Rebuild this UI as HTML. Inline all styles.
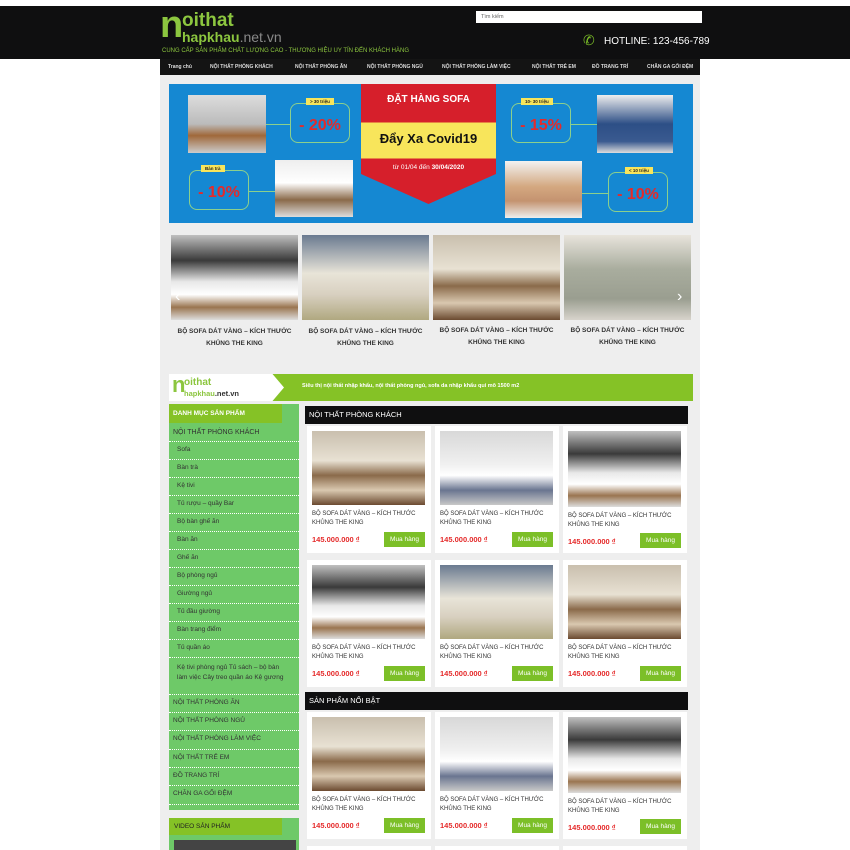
<!DOCTYPE html>
<html><head><meta charset="utf-8"><style>
*{margin:0;padding:0;box-sizing:border-box}
body{width:850px;height:850px;overflow:hidden;background:#fff;font-family:"Liberation Sans",Arial,sans-serif;position:relative}
.a{position:absolute}
#hdr{left:0;top:6px;width:850px;height:53px;background:#0f0f10}
#nav{left:160px;top:59px;width:540px;height:16px;background:#141414;color:#ddd;font-size:5px;font-weight:bold}
#nav span{position:absolute;top:5px}
#wrap{left:160px;top:75px;width:540px;height:775px;background:#eee}
.img1{background:linear-gradient(180deg,#c9bfae 0%,#e8e1d3 40%,#8a6a4a 60%,#d9c8b0 80%,#6b4a30 100%)}
.img2{background:linear-gradient(180deg,#d8d8d8 0%,#f0f0f0 45%,#ffffff 60%,#6a7590 80%,#c8c8c8 100%)}
.img3{background:linear-gradient(180deg,#c0c0c0 0%,#3a3a3a 30%,#e8e8e8 55%,#fff 70%,#9a7550 85%,#ddd 100%)}
.card{position:absolute;width:124px;height:127px;background:#fff}
.card .im{position:absolute;left:5px;top:5px;width:113px;height:74px}
.card .t{position:absolute;left:5px;top:84px;width:118px;font-size:6px;line-height:9px;color:#333}
.card .p{position:absolute;left:5px;top:109px;font-size:7.5px;font-weight:bold;color:#e52a2a}
.card .b{position:absolute;right:6px;top:106px;width:41px;height:15px;background:#7cbf28;color:#fff;font-size:6.5px;text-align:center;line-height:15px}
.sb{position:absolute;left:169px;width:130px;border-bottom:1px dotted #fff;font-size:7px;color:#333}
.sh{position:absolute;left:305px;width:383px;height:18px;background:#0f0f10;color:#fff;font-size:7.5px;line-height:18px;padding-left:4px}
.sl{position:absolute;width:127px;height:85px}
.cap{position:absolute;width:127px;text-align:center;font-size:6.5px;font-weight:bold;color:#333;line-height:12px}
.pb{position:absolute;width:60px;height:40px;border:1px solid #8cd08c;border-radius:8px;color:#e52a2a;font-weight:bold;font-size:16px;text-align:center;line-height:44px}
.tag{position:absolute;background:#f8e55b;color:#222;font-size:4.5px;font-weight:bold;padding:1px 4px}
</style></head><body>
<div id="hdr" class="a">
  <div class="a" style="left:160px;top:2px;font-size:38px;font-weight:bold;color:#8cc63f;line-height:34px">n</div>
  <div class="a" style="left:182px;top:5px;font-size:19px;font-weight:bold;color:#8cc63f;line-height:19px">oithat</div>
  <div class="a" style="left:182px;top:23px;font-size:14px;font-weight:bold;color:#8cc63f;line-height:16px">hapkhau<span style="color:#888;font-weight:normal">.net.vn</span></div>
  <div class="a" style="left:162px;top:42px;font-size:6px;color:#8cc63f">CUNG CẤP SẢN PHẨM CHẤT LƯỢNG CAO - THƯƠNG HIỆU UY TÍN ĐẾN KHÁCH HÀNG</div>
  <div class="a" style="left:476px;top:5px;width:226px;height:12px;background:#fff;font-size:5.5px;color:#666;padding:3px 5px">Tìm kiếm</div>
  <div class="a" style="left:583px;top:26px;font-size:14px;color:#7cbf28">✆</div>
  <div class="a" style="left:604px;top:30px;font-size:10px;color:#fff">HOTLINE: 123-456-789</div>
</div>
<div id="nav" class="a">
<span style="left:8px">Trang chủ</span><span style="left:50px">NỘI THẤT PHÒNG KHÁCH</span><span style="left:135px">NỘI THẤT PHÒNG ĂN</span><span style="left:207px">NỘI THẤT PHÒNG NGỦ</span><span style="left:282px">NỘI THẤT PHÒNG LÀM VIỆC</span><span style="left:372px">NỘI THẤT TRẺ EM</span><span style="left:432px">ĐỒ TRANG TRÍ</span><span style="left:487px">CHĂN GA GỐI ĐỆM</span>
</div>
<div id="wrap" class="a"></div>
<!-- banner -->
<div class="a" style="left:169px;top:84px;width:524px;height:139px;background:#1588d2"></div>
<div class="a" style="left:188px;top:95px;width:78px;height:58px;background:linear-gradient(#ddd,#bbb 50%,#a0683a 70%,#ccc)"></div>
<div class="pb" style="left:290px;top:103px">- 20%</div>
<div class="tag" style="left:306px;top:98px">&gt; 30 triệu</div>
<div class="a" style="left:266px;top:124px;width:24px;height:1px;background:#8cd08c"></div>
<div class="pb" style="left:189px;top:170px">- 10%</div>
<div class="tag" style="left:201px;top:165px">Bàn trà</div>
<div class="a" style="left:249px;top:191px;width:26px;height:1px;background:#8cd08c"></div>
<div class="a" style="left:275px;top:160px;width:78px;height:57px;background:linear-gradient(#eee,#fff 40%,#8a6a4a 70%,#ddd)"></div>
<div class="a" style="left:361px;top:84px;width:135px;height:120px;background:linear-gradient(#d61f2b 0,#d61f2b 32%,#f8e55b 32%,#f8e55b 62%,#d61f2b 62%);clip-path:polygon(0 0,100% 0,100% 75%,50% 100%,0 75%)"></div>
<div class="a" style="left:361px;top:94px;width:135px;text-align:center;color:#fff;font-weight:bold;font-size:10px">ĐẶT HÀNG SOFA</div>
<div class="a" style="left:361px;top:131px;width:135px;text-align:center;color:#111;font-weight:bold;font-size:13px">Đẩy Xa Covid19</div>
<div class="a" style="left:361px;top:164px;width:135px;text-align:center;color:#fff;font-size:6.5px">từ 01/04 đến <b>30/04/2020</b></div>
<div class="pb" style="left:511px;top:103px">- 15%</div>
<div class="tag" style="left:521px;top:98px">10- 30 triệu</div>
<div class="a" style="left:571px;top:124px;width:26px;height:1px;background:#8cd08c"></div>
<div class="a" style="left:597px;top:95px;width:76px;height:58px;background:linear-gradient(#eee,#2d4f86 50%,#3a5a90 80%,#ddd)"></div>
<div class="a" style="left:505px;top:161px;width:77px;height:57px;background:linear-gradient(#f2f2f2,#d4a880 45%,#c49370 70%,#eee)"></div>
<div class="pb" style="left:608px;top:172px">- 10%</div>
<div class="tag" style="left:625px;top:167px">&lt; 10 triệu</div>
<div class="a" style="left:582px;top:193px;width:26px;height:1px;background:#8cd08c"></div>
<!-- slider -->
<div class="sl img3" style="left:171px;top:235px"></div>
<div class="sl img1" style="left:302px;top:235px;background:linear-gradient(#6a7a90,#e8e4d8 45%,#d8d0c0 70%,#b0a880)"></div>
<div class="sl img1" style="left:433px;top:235px"></div>
<div class="sl" style="left:564px;top:235px;background:linear-gradient(#e8e4dc,#a9ad9e 40%,#9a9e90 75%,#d8d4cc)"></div>
<div class="a" style="left:175px;top:288px;color:#fff;font-size:16px">‹</div>
<div class="a" style="left:677px;top:288px;color:#fff;font-size:16px">›</div>
<div class="cap" style="left:171px;top:326px">BỘ SOFA DÁT VÀNG – KÍCH THƯỚC KHỦNG THE KING</div>
<div class="cap" style="left:302px;top:326px">BỘ SOFA DÁT VÀNG – KÍCH THƯỚC KHỦNG THE KING</div>
<div class="cap" style="left:433px;top:325px">BỘ SOFA DÁT VÀNG – KÍCH THƯỚC KHỦNG THE KING</div>
<div class="cap" style="left:564px;top:325px">BỘ SOFA DÁT VÀNG – KÍCH THƯỚC KHỦNG THE KING</div>
<!-- green bar -->
<div class="a" style="left:169px;top:374px;width:524px;height:27px;background:#85c226"></div>
<div class="a" style="left:169px;top:374px;width:115px;height:27px;background:#fff;clip-path:polygon(0 0,90% 0,100% 50%,90% 100%,0 100%)"></div>
<div class="a" style="left:172px;top:372px;font-size:22px;font-weight:bold;color:#8cc63f">n</div>
<div class="a" style="left:184px;top:377px;font-size:10px;font-weight:bold;color:#8cc63f">oithat</div>
<div class="a" style="left:184px;top:389px;font-size:7.5px;font-weight:bold;color:#8cc63f">hapkhau<span style="color:#333">.net.vn</span></div>
<div class="a" style="left:302px;top:383px;font-size:5.5px;font-weight:bold;color:#fff">Siêu thị nội thất nhập khẩu, nội thất phòng ngủ, sofa da nhập khẩu qui mô 1500 m2</div>
<!-- sidebar -->
<div class="a" style="left:169px;top:404px;width:130px;height:406px;background:#6ec968"></div>
<div class="a" style="left:169px;top:404px;width:113px;height:19px;background:#85c226;color:#fff;font-size:6.5px;font-weight:bold;line-height:19px;padding-left:4px">DANH MỤC SẢN PHẨM</div>
<div class="sb" style="top:427px;height:15px;padding:2px 4px;font-size:7px">NỘI THẤT PHÒNG KHÁCH</div>
<div class="sb" style="top:442px;height:18px;padding:4px 8px;font-size:6.5px">Sofa</div>
<div class="sb" style="top:460px;height:18px;padding:4px 8px;font-size:6.5px">Bàn trà</div>
<div class="sb" style="top:478px;height:18px;padding:4px 8px;font-size:6.5px">Kệ tivi</div>
<div class="sb" style="top:496px;height:18px;padding:4px 8px;font-size:6.5px">Tủ rượu – quầy Bar</div>
<div class="sb" style="top:514px;height:18px;padding:4px 8px;font-size:6.5px">Bộ bàn ghế ăn</div>
<div class="sb" style="top:532px;height:18px;padding:4px 8px;font-size:6.5px">Bàn ăn</div>
<div class="sb" style="top:550px;height:18px;padding:4px 8px;font-size:6.5px">Ghế ăn</div>
<div class="sb" style="top:568px;height:18px;padding:4px 8px;font-size:6.5px">Bộ phòng ngủ</div>
<div class="sb" style="top:586px;height:18px;padding:4px 8px;font-size:6.5px">Giường ngủ</div>
<div class="sb" style="top:604px;height:18px;padding:4px 8px;font-size:6.5px">Tủ đầu giường</div>
<div class="sb" style="top:622px;height:18px;padding:4px 8px;font-size:6.5px">Bàn trang điểm</div>
<div class="sb" style="top:640px;height:18px;padding:4px 8px;font-size:6.5px">Tủ quần áo</div>
<div class="sb" style="top:658px;height:37px;padding:5px 12px 0 8px;font-size:6.5px;line-height:10px">Kệ tivi phòng ngủ Tủ sách – bộ bàn làm việc Cây treo quần áo Kệ gương</div>
<div class="sb" style="top:695px;height:18px;padding:4px 4px;font-size:6.5px">NỘI THẤT PHÒNG ĂN</div>
<div class="sb" style="top:713px;height:18px;padding:4px 4px;font-size:6.5px">NỘI THẤT PHÒNG NGỦ</div>
<div class="sb" style="top:731px;height:19px;padding:4px 4px;font-size:6.5px">NỘI THẤT PHÒNG LÀM VIỆC</div>
<div class="sb" style="top:750px;height:18px;padding:4px 4px;font-size:6.5px">NỘI THẤT TRẺ EM</div>
<div class="sb" style="top:768px;height:18px;padding:4px 4px;font-size:6.5px">ĐỒ TRANG TRÍ</div>
<div class="sb" style="top:786px;height:19px;padding:4px 4px;font-size:6.5px">CHĂN GA GỐI ĐỆM</div>
<div class="a" style="left:169px;top:818px;width:130px;height:32px;background:#6ec968"></div>
<div class="a" style="left:169px;top:818px;width:113px;height:17px;background:#85c226;color:#222;font-size:6.5px;line-height:17px;padding-left:5px">VIDEO SẢN PHẨM</div>
<div class="a" style="left:174px;top:840px;width:122px;height:10px;background:#444"></div>
<!-- main -->
<div class="sh" style="top:406px">NỘI THẤT PHÒNG KHÁCH</div>
<div class="sh" style="top:692px">SẢN PHẨM NỔI BẬT</div>

<div class="card" style="left:307px;top:426px"><div class="im img1"></div><div class="t">BỘ SOFA DÁT VÀNG – KÍCH THƯỚC KHỦNG THE KING</div><div class="p">145.000.000 ₫</div><div class="b">Mua hàng</div></div>
<div class="card" style="left:435px;top:426px"><div class="im img2"></div><div class="t">BỘ SOFA DÁT VÀNG – KÍCH THƯỚC KHỦNG THE KING</div><div class="p">145.000.000 ₫</div><div class="b">Mua hàng</div></div>
<div class="card" style="left:563px;top:426px"><div class="im img3" style="height:76px"></div><div class="t" style="top:86px">BỘ SOFA DÁT VÀNG – KÍCH THƯỚC KHỦNG THE KING</div><div class="p" style="top:111px">145.000.000 ₫</div><div class="b" style="top:107px">Mua hàng</div></div>

<div class="card" style="left:307px;top:560px"><div class="im img3"></div><div class="t">BỘ SOFA DÁT VÀNG – KÍCH THƯỚC KHỦNG THE KING</div><div class="p">145.000.000 ₫</div><div class="b">Mua hàng</div></div>
<div class="card" style="left:435px;top:560px"><div class="im" style="background:linear-gradient(#6a7a90,#e8e4d8 45%,#d8d0c0 70%,#b0a880)"></div><div class="t">BỘ SOFA DÁT VÀNG – KÍCH THƯỚC KHỦNG THE KING</div><div class="p">145.000.000 ₫</div><div class="b">Mua hàng</div></div>
<div class="card" style="left:563px;top:560px"><div class="im img1"></div><div class="t">BỘ SOFA DÁT VÀNG – KÍCH THƯỚC KHỦNG THE KING</div><div class="p">145.000.000 ₫</div><div class="b">Mua hàng</div></div>

<div class="card" style="left:307px;top:712px"><div class="im img1"></div><div class="t">BỘ SOFA DÁT VÀNG – KÍCH THƯỚC KHỦNG THE KING</div><div class="p">145.000.000 ₫</div><div class="b">Mua hàng</div></div>
<div class="card" style="left:435px;top:712px"><div class="im img2"></div><div class="t">BỘ SOFA DÁT VÀNG – KÍCH THƯỚC KHỦNG THE KING</div><div class="p">145.000.000 ₫</div><div class="b">Mua hàng</div></div>
<div class="card" style="left:563px;top:712px"><div class="im img3" style="height:76px"></div><div class="t" style="top:86px">BỘ SOFA DÁT VÀNG – KÍCH THƯỚC KHỦNG THE KING</div><div class="p" style="top:111px">145.000.000 ₫</div><div class="b" style="top:107px">Mua hàng</div></div>

<div class="card" style="left:307px;top:846px;height:4px"></div>
<div class="card" style="left:435px;top:846px;height:4px"></div>
<div class="card" style="left:563px;top:846px;height:4px"></div>
</body></html>
